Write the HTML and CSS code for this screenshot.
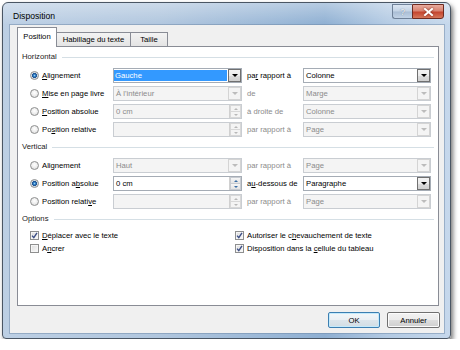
FILE: index.html
```html
<!DOCTYPE html>
<html lang="fr">
<head>
<meta charset="utf-8">
<title>Disposition</title>
<link rel="stylesheet" href="styles.css">
</head>
<body>
<div class="window">
  <div class="titlebar">
    <span class="title">Disposition</span>
    <div class="caption">
      <div class="cap help">?</div>
      <div class="cap close"><svg width="11" height="8" viewBox="0 0 11 8"><path d="M2 1 L9 7 M9 1 L2 7" stroke="#fff" stroke-width="2" stroke-linecap="square"/></svg></div>
    </div>
  </div>
  <div class="client">
    <div class="tabs">
      <div class="tab active">Position</div>
      <div class="tab t2">Habillage du texte</div>
      <div class="tab t3">Taille</div>
    </div>
    <div class="panel">
      <div class="ghead"><span>Horizontal</span><i class="rule"></i></div>
      <div class="grid">
        <div class="opt"><span class="radio checked"></span><span><u>A</u>lignement</span></div>
        <div class="field on"><span class="val"><span class="sel">Gauche</span></span><span class="drop"></span></div>
        <div class="lab"><span>pa<u>r</u> rapport à</span></div>
        <div class="field on"><span class="val">Colonne</span><span class="drop"></span></div>

        <div class="opt"><span class="radio"></span><span><u>M</u>ise en page livre</span></div>
        <div class="field off"><span class="val">À l'intérieur</span><span class="drop"></span></div>
        <div class="lab dis"><span>de</span></div>
        <div class="field off"><span class="val">Marge</span><span class="drop"></span></div>

        <div class="opt"><span class="radio"></span><span><u>P</u>osition absolue</span></div>
        <div class="field off"><span class="val">0 cm</span><span class="spin"><span class="up"></span><span class="dn"></span></span></div>
        <div class="lab dis"><span>à droite de</span></div>
        <div class="field off"><span class="val">Colonne</span><span class="drop"></span></div>

        <div class="opt"><span class="radio"></span><span>Po<u>s</u>ition relative</span></div>
        <div class="field off"><span class="val"></span><span class="spin"><span class="up"></span><span class="dn"></span></span></div>
        <div class="lab dis"><span>par rapport à</span></div>
        <div class="field off"><span class="val">Page</span><span class="drop"></span></div>
      </div>

      <div class="ghead"><span>Vertical</span><i class="rule"></i></div>
      <div class="grid">
        <div class="opt"><span class="radio"></span><span>Alignement</span></div>
        <div class="field off"><span class="val">Haut</span><span class="drop"></span></div>
        <div class="lab dis"><span>par rapport à</span></div>
        <div class="field off"><span class="val">Page</span><span class="drop"></span></div>

        <div class="opt"><span class="radio checked"></span><span>Position a<u>b</u>solue</span></div>
        <div class="field on"><span class="val">0 cm</span><span class="spin"><span class="up"></span><span class="dn"></span></span></div>
        <div class="lab"><span>a<u>u</u>-dessous de</span></div>
        <div class="field on"><span class="val">Paragraphe</span><span class="drop"></span></div>

        <div class="opt"><span class="radio"></span><span>Position relati<u>v</u>e</span></div>
        <div class="field off"><span class="val"></span><span class="spin"><span class="up"></span><span class="dn"></span></span></div>
        <div class="lab dis"><span>par rapport à</span></div>
        <div class="field off"><span class="val">Page</span><span class="drop"></span></div>
      </div>

      <div class="ghead"><span>Options</span><i class="rule"></i></div>
      <div class="checks">
        <div class="opt"><span class="check on"><svg width="7" height="7" viewBox="0 0 7 7"><path d="M1 3.6 L2.8 5.6 L6 0.8" fill="none" stroke="#3d4f86" stroke-width="1.4"/></svg></span><span><u>D</u>éplacer avec le texte</span></div>
        <div class="opt"><span class="check on"><svg width="7" height="7" viewBox="0 0 7 7"><path d="M1 3.6 L2.8 5.6 L6 0.8" fill="none" stroke="#3d4f86" stroke-width="1.4"/></svg></span><span>Autoriser le c<u>h</u>evauchement de texte</span></div>
        <div class="opt"><span class="check"></span><span>A<u>n</u>crer</span></div>
        <div class="opt"><span class="check on"><svg width="7" height="7" viewBox="0 0 7 7"><path d="M1 3.6 L2.8 5.6 L6 0.8" fill="none" stroke="#3d4f86" stroke-width="1.4"/></svg></span><span>Disposition dans la <u>c</u>ellule du tableau</span></div>
      </div>
    </div>
    <div class="footer">
      <button class="btn default">OK</button>
      <button class="btn cancel">Annuler</button>
    </div>
  </div>
</div>
</body>
</html>
```

FILE: styles.css
```css
* { box-sizing: border-box; }
body {
  margin: 0;
  background: #ffffff;
  font-family: "Liberation Sans", Arial, sans-serif;
  font-size: 7.7px;
  color: #000;
}
u { text-decoration-thickness: 1px; text-underline-offset: 1px; }

.window {
  margin: 2px 0 0 2px;
  width: 449px;
  height: 337px;
  border: 1px solid #4a5664;
  border-radius: 6px 6px 4px 4px;
  background:
    linear-gradient(to bottom, rgba(255,255,255,0.35), rgba(255,255,255,0) 22px),
    linear-gradient(to right, #bccfe4 0%, #b0c6de 35%, #98b6d6 62%, #8eafd2 72%, #b3cae3 86%, #c6d8ec 100%);
  box-shadow: 2px 3px 5px rgba(0,0,0,0.55);
  padding: 0 6px 5px 7px;
  display: flex;
  flex-direction: column;
}

.titlebar {
  height: 22px;
  display: flex;
  align-items: flex-start;
  flex: none;
}
.title {
  font-size: 8.6px;
  line-height: 12px;
  padding-top: 7px;
  margin-left: 3px;
  color: #000;
}
.caption { margin-left: auto; display: flex; margin-top: 1px; }
.cap {
  height: 15px;
  display: flex;
  align-items: center;
  justify-content: center;
}
.help {
  width: 20px;
  border: 1px solid #6f8198;
  border-right: none;
  border-radius: 0 0 0 3px;
  background: linear-gradient(#dce6f2 0%, #c3d3e5 48%, #a9bdd4 52%, #c2d3e6 100%);
  color: #f4f7fb;
  font-size: 9px;
  text-shadow: 0 0 1px #4d5f75;
}
.close {
  width: 32px;
  border: 1px solid #6e2a20;
  border-radius: 0 0 3px 0;
  background: linear-gradient(#e8ab9e 0%, #d98371 45%, #c5452f 55%, #d6775b 100%);
}
.close svg { filter: drop-shadow(0 0 1px #7a2a1c); }

.client {
  flex: 1;
  background: #f0f0f0;
  padding: 2px 5px 0 7px;
  display: flex;
  flex-direction: column;
  box-shadow: 0 0 0 1px rgba(110,135,165,0.5);
}

.tabs {
  height: 19px;
  display: flex;
  align-items: flex-end;
  position: relative;
  z-index: 1;
  flex: none;
}
.tab {
  height: 14px;
  border: 1px solid #898c95;
  border-bottom: none;
  background: linear-gradient(#f3f3f3, #e4e4e4);
  display: flex;
  align-items: center;
  justify-content: center;
}
.tab.active {
  width: 40px;
  height: 20px;
  margin-bottom: -1px;
  background: #fff;
  padding-bottom: 2px;
}
.tab.t2 { width: 74px; border-left: none; }
.tab.t3 { width: 37px; border-left: none; }

.panel {
  height: 260px;
  flex: none;
  border: 1px solid #898c95;
  background: #fff;
  padding: 4px 0 0 4px;
}

.ghead {
  display: flex;
  align-items: center;
  height: 12px;
  line-height: 12px;
  color: #1a1a1a;
}
.rule {
  flex: 1;
  height: 1px;
  background: #d5dfe5;
  margin: 1px 4px 0 5px;
}

.grid {
  margin: 5px 0 4px 8px;
  display: grid;
  grid-template-columns: 83px 129px 61px 128px;
  grid-auto-rows: 15px;
  row-gap: 3px;
}

.opt {
  display: flex;
  align-items: center;
  gap: 3px;
  white-space: nowrap;
}
.lab {
  display: flex;
  align-items: center;
  padding-left: 5px;
  white-space: nowrap;
}
.dis { color: #8b8b8b; }

.radio {
  width: 9px;
  height: 9px;
  border: 1px solid #8e8f8f;
  border-radius: 50%;
  background: radial-gradient(circle at 50% 40%, #ffffff 0, #f2f2f2 40%, #d8d8d8 100%);
  flex: none;
}
.radio.checked {
  background: radial-gradient(circle at 50% 50%, #8fd0f5 0, #2f7cc3 1.2px, #1a4f8e 2.2px, #cfd8e2 2.8px, #f2f2f2 100%);
}

.check {
  width: 9px;
  height: 9px;
  border: 1px solid #8e8f8f;
  background: linear-gradient(135deg, #dcdcdc, #fbfbfb);
  box-shadow: inset 0 0 0 1px #f6f6f6;
  flex: none;
  display: flex;
  align-items: center;
  justify-content: center;
}
.check svg { display: block; }

.field {
  display: flex;
  align-items: stretch;
  border: 1px solid #a5acb5;
  background: #fff;
  height: 15px;
}
.field.off {
  border-color: #c9cdd2;
  background: #f4f4f4;
  color: #8b8b8b;
}
.val {
  flex: 1;
  display: flex;
  align-items: center;
  padding-left: 2px;
  white-space: nowrap;
  overflow: hidden;
}
.val:has(.sel) { padding-left: 0; }
.sel {
  flex: 1;
  align-self: stretch;
  margin: 1px 1px 1px 0;
  background: #3399ff;
  color: #fff;
  display: flex;
  align-items: center;
  padding-left: 1px;
}

.drop {
  width: 13px;
  flex: none;
  border: 1px solid #707070;
  background: linear-gradient(#f3f3f3 0%, #ebebeb 50%, #dddddd 51%, #cfcfcf 100%);
  display: flex;
  align-items: center;
  justify-content: center;
}
.drop::after {
  content: "";
  border-left: 3px solid transparent;
  border-right: 3px solid transparent;
  border-top: 3px solid #000;
}
.off .drop {
  border-color: #d4d4d4;
  background: #f4f4f4;
}
.off .drop::after { border-top-color: #bcbcbc; }

.spin {
  width: 12px;
  flex: none;
  display: flex;
  flex-direction: column;
  border-left: 1px solid #d0d0d0;
}
.spin span {
  flex: 1;
  display: flex;
  align-items: center;
  justify-content: center;
  border: 1px solid #c8ccd2;
  background: linear-gradient(#f6f6f6, #e4e4e4);
}
.spin .dn { border-top: none; }
.spin .up::after {
  content: "";
  border-left: 2px solid transparent;
  border-right: 2px solid transparent;
  border-bottom: 2px solid #3a6ea5;
}
.spin .dn::after {
  content: "";
  border-left: 2px solid transparent;
  border-right: 2px solid transparent;
  border-top: 2px solid #3a6ea5;
}
.off .spin span { background: #f4f4f4; border-color: #d8d8d8; }
.off .spin .up::after { border-bottom-color: #b8b8b8; }
.off .spin .dn::after { border-top-color: #b8b8b8; }

.checks {
  margin: 4px 0 0 8px;
  display: grid;
  grid-template-columns: 205px 1fr;
  grid-auto-rows: 13px;
}

.footer {
  margin-top: 6px;
  margin-right: -1px;
  display: flex;
  justify-content: flex-end;
  gap: 7px;
}
.btn {
  height: 16px;
  font-family: inherit;
  font-size: 7.7px;
  color: #000;
  border: 1px solid #707070;
  border-radius: 2px;
  background: linear-gradient(#f2f2f2 0%, #ebebeb 50%, #dddddd 51%, #cfcfcf 100%);
  box-shadow: inset 0 0 0 1px #fcfcfc;
  padding: 0;
}
.btn.default {
  width: 52px;
  border-color: #3c7fb1;
  box-shadow: inset 0 0 0 1px #c4eafc;
  background: linear-gradient(#f4f7f9 0%, #eaf0f4 50%, #dce5eb 51%, #d2dde4 100%);
}
.btn.cancel { width: 53px; }
```
